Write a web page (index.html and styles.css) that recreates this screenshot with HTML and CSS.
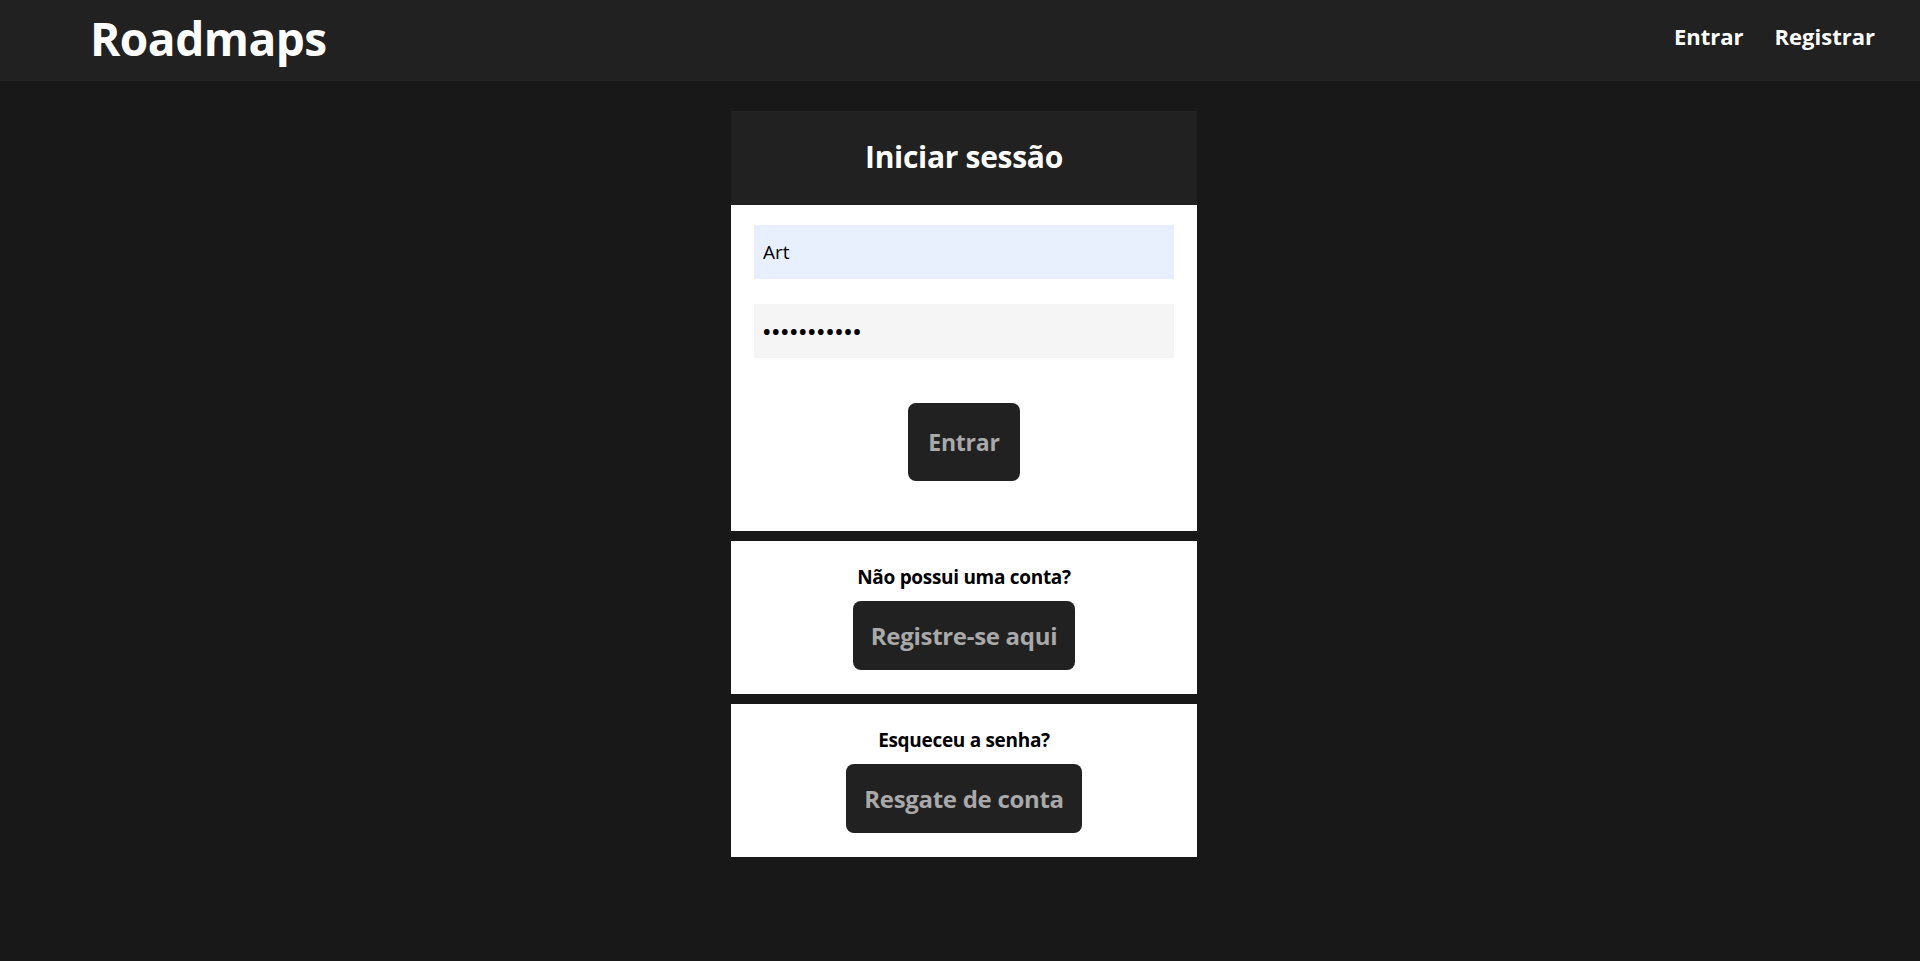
FILE: index.html
```html
<!DOCTYPE html>
<html lang="pt-BR">
<head>
<meta charset="utf-8">
<title>Roadmaps</title>
<link rel="stylesheet" href="styles.css">
</head>
<body>
<header class="topbar">
  <a class="brand" href="#">Roadmaps</a>
  <nav class="nav">
    <a href="#">Entrar</a>
    <a href="#">Registrar</a>
  </nav>
</header>
<main class="main">
  <div class="stack">
    <section class="login">
      <div class="login-head"><h2>Iniciar sessão</h2></div>
      <form class="login-body">
        <input class="field field-auto" type="text" value="Art">
        <input class="field field-pass" type="password" value="12345678901">
        <button class="btn btn-login" type="button">Entrar</button>
      </form>
    </section>
    <section class="panel">
      <h3>Não possui uma conta?</h3>
      <button class="btn btn-wide" type="button">Registre-se aqui</button>
    </section>
    <section class="panel">
      <h3>Esqueceu a senha?</h3>
      <button class="btn btn-wide" type="button">Resgate de conta</button>
    </section>
  </div>
</main>
</body>
</html>
```
FILE: styles.css
```css
* { box-sizing: border-box; }
html, body { margin: 0; }
body {
  background: #181818;
  font-family: "Open Sans", "Noto Sans", "Liberation Sans", sans-serif;
  color: #000;
  min-height: 961px;
}
.topbar {
  height: 81px;
  background: #212121;
  display: flex;
  align-items: center;
  justify-content: space-between;
  padding: 0 45px 0 90px;
}
.brand {
  color: #fff;
  text-decoration: none;
  font-weight: 700;
  font-size: 46px;
  letter-spacing: -0.5px;
  margin-top: -6px;
}
.nav { display: flex; gap: 31px; margin-top: -10px; }
.nav a {
  color: #fff;
  text-decoration: none;
  font-weight: 700;
  font-size: 22px;
  letter-spacing: 0;
}
.main {
  display: flex;
  justify-content: center;
  padding: 30px 0 0 8px;
}
.stack {
  width: 466px;
  display: flex;
  flex-direction: column;
  gap: 10px;
}
.login-head {
  height: 94px;
  background: #212121;
  display: flex;
  align-items: center;
  justify-content: center;
  padding-bottom: 3px;
}
.login-head h2 {
  margin: 0;
  color: #fff;
  font-size: 30px;
  font-weight: 700;
  letter-spacing: -0.3px;
}
.login-body {
  background: #fff;
  padding: 20px 23px 50px;
  display: flex;
  flex-direction: column;
  align-items: center;
  margin: 0;
}
.field {
  width: 420px;
  height: 54px;
  border: none;
  outline: none;
  background: #f5f5f5;
  padding: 0 9px;
  font-family: "Open Sans", "Noto Sans", sans-serif;
  font-size: 19px;
  color: #000;
  margin-bottom: 25px;
}
.field-auto { background: #e8f0fe; }
.field-pass { letter-spacing: 1.5px; font-size: 20px; font-weight: 700; }
.field:last-of-type { margin-bottom: 0; }
.btn {
  background: #212121;
  color: #a9a9a9;
  border: none;
  border-radius: 8px;
  font-family: "Open Sans", "Noto Sans", sans-serif;
  font-weight: 700;
  cursor: pointer;
}
.btn-login {
  margin-top: 45px;
  width: 112px;
  height: 78px;
  font-size: 23px;
  letter-spacing: -0.2px;
}
.panel {
  background: #fff;
  display: flex;
  flex-direction: column;
  align-items: center;
  padding: 23px 0 24px;
}
.panel h3 {
  margin: 0 0 11px;
  font-size: 19px;
  font-weight: 700;
  line-height: 26px;
  letter-spacing: -0.3px;
}
.btn-wide {
  height: 69px;
  padding: 0 18px;
  font-size: 24px;
  letter-spacing: -0.3px;
}
```
